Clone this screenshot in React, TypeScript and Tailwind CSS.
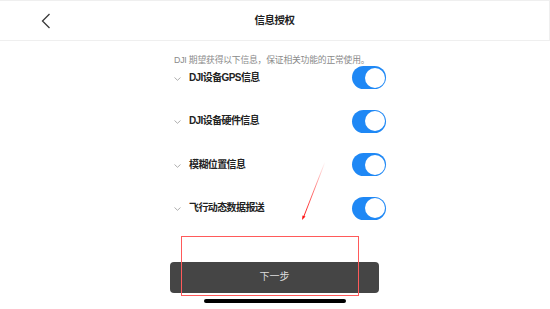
import React from "react";

const rows = ["DJI设备GPS信息", "DJI设备硬件信息", "模糊位置信息", "飞行动态数据报送"];

function Toggle() {
  return (
    <div className="w-[34px] h-[23px] rounded-full bg-[#1f88f5] flex items-center justify-end pr-[1.5px]">
      <div className="w-[20px] h-[20px] rounded-full bg-white" />
    </div>
  );
}

export default function App() {
  return (
    <div
      className="relative w-[550px] h-[309px] bg-white overflow-hidden"
      style={{ fontFamily: '"Liberation Sans", "Noto Sans CJK SC", sans-serif' }}
    >
      <div className="h-[41px] flex items-center border-t border-r border-b border-[#efefef]">
        <div className="w-[100px] pl-[41px] flex items-center">
          <svg width="10" height="16" viewBox="0 0 10 16">
            <path d="M8.5 1 L1.5 8 L8.5 15" fill="none" stroke="#3a3a3a" strokeWidth="1.3" />
          </svg>
        </div>
        <div className="flex-1 text-center text-[10.5px] tracking-[-0.5px] font-bold text-[#222] leading-none">信息授权</div>
        <div className="w-[100px]" />
      </div>

      <div className="mt-[14px] pl-[174px] text-[8.8px] tracking-[-0.2px] leading-[11px] text-[#8a8a8a] whitespace-nowrap">
        DJI 期望获得以下信息，保证相关功能的正常使用。
      </div>

      <div className="ml-[174px] w-[212px] flex flex-col gap-[20.67px]">
        {rows.map((r) => (
          <div key={r} className="h-[23px] flex items-center justify-between">
            <div className="flex items-center">
              <svg width="7" height="4" viewBox="0 0 7 4" className="mr-[8px] mt-[2px]">
                <path d="M0.5 0.5 L3.5 3.3 L6.5 0.5" fill="none" stroke="#9a9a9a" strokeWidth="0.8" />
              </svg>
              <span className="text-[10px] tracking-[-0.6px] font-semibold text-[#222] leading-none">{r}</span>
            </div>
            <Toggle />
          </div>
        ))}
      </div>

      <div className="mt-[42px] ml-[170px] w-[209px] h-[31px] rounded-[4px] bg-[#454545] flex items-center justify-center">
        <span className="text-[10px] text-[#dedede] leading-none">下一步</span>
      </div>

      <div className="mt-[6px] ml-[204px] w-[142px] h-[4px] rounded-full bg-black" />

      <div className="absolute left-[181px] top-[236px] w-[178px] h-[60px] border border-[#ff5a5a] pointer-events-none" />

      <svg className="absolute left-0 top-0 pointer-events-none" width="550" height="309" viewBox="0 0 550 309">
        <defs>
          <linearGradient id="ar" x1="325" y1="162" x2="303" y2="219" gradientUnits="userSpaceOnUse">
            <stop offset="0" stopColor="#ff2020" stopOpacity="0" />
            <stop offset="0.5" stopColor="#ff2020" stopOpacity="0.6" />
            <stop offset="1" stopColor="#ff1010" stopOpacity="1" />
          </linearGradient>
        </defs>
        <line x1="325" y1="162" x2="304" y2="216" stroke="url(#ar)" strokeWidth="1" />
        <path d="M302 220 L302.5 215.5 L305.5 216.5 Z" fill="#ff1010" />
      </svg>
    </div>
  );
}
